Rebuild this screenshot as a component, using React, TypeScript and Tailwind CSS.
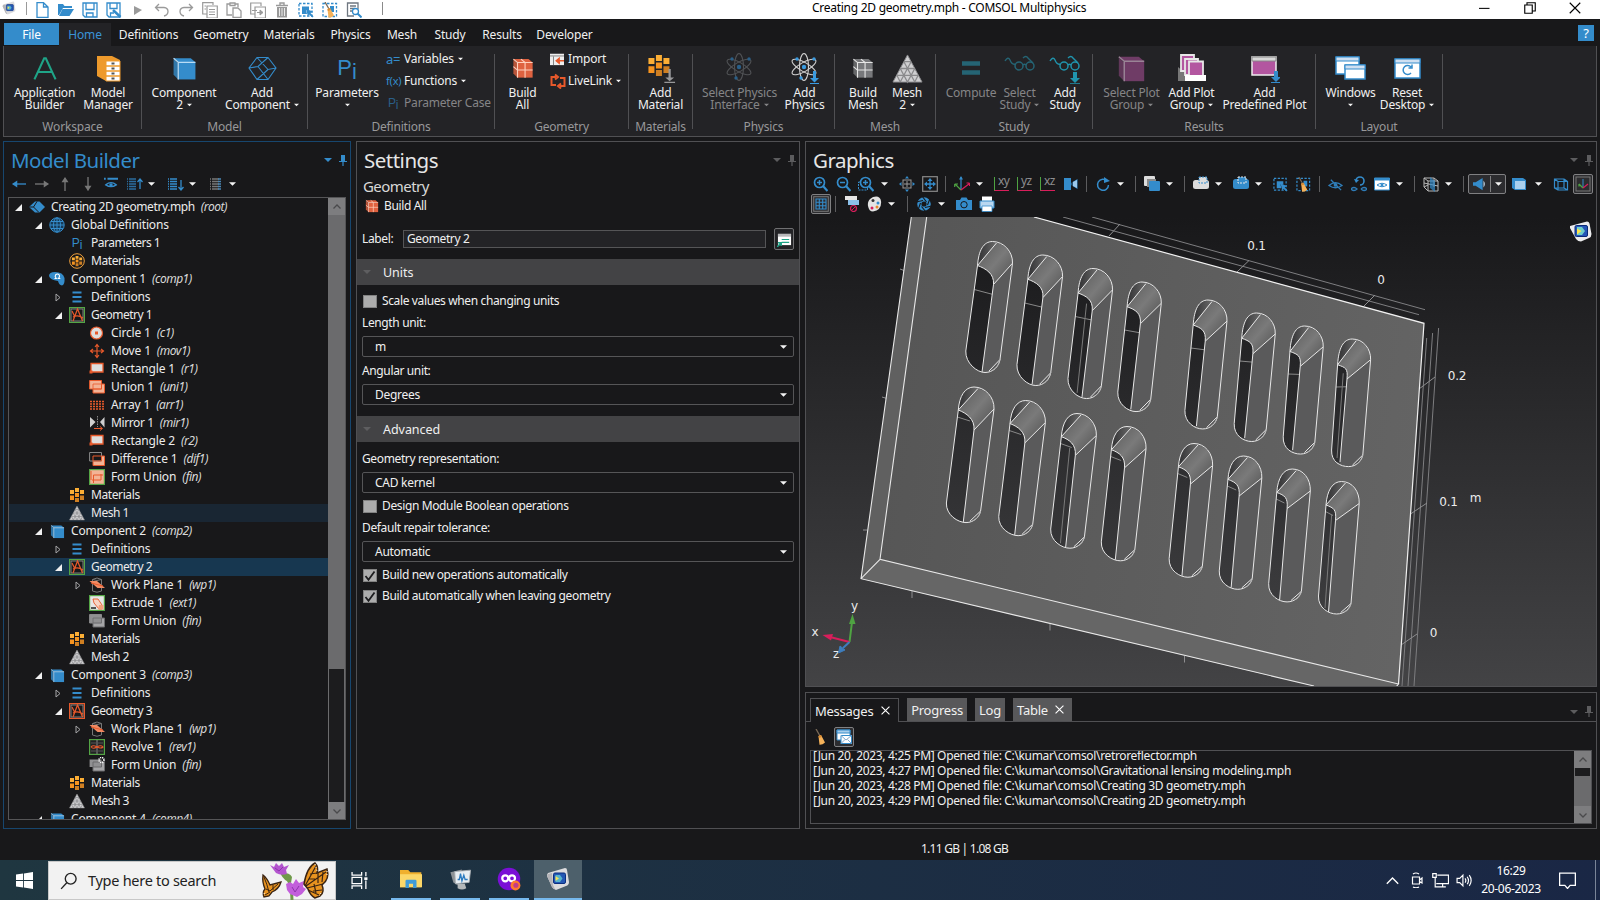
import React from "react";

type P = { children?: React.ReactNode; s?: number; w?: number; h?: number; vb?: string };
const B = "#348ccb";
const O = "#e8592b";
const W = "#f4f4f4";

const Svg = ({ children, s = 16, w, h, vb }: P) => (
  <svg width={w ?? s} height={h ?? s} viewBox={vb ?? "0 0 16 16"} fill="none" className="shrink-0 block">
    {children}
  </svg>
);

const Caret = ({ c = W, w = 7 }: { c?: string; w?: number }) => (
  <Svg w={w} h={4} vb="0 0 8 4">
    <path d="M0 0H8L4 4Z" fill={c} />
  </Svg>
);

const Cube = ({ s = 16, c = B, line = "#b9dcf5", grid = false }: { s?: number; c?: string; line?: string; grid?: boolean }) => (
  <Svg s={s}>
    <path d="M1 2L4 4.500V15L1 12Z" fill={c} opacity=".8" />
    <path d="M1 1.500H12L15 4H4Z" fill={c} />
    <path d="M4 4H15V15H4Z" fill={c} />
    <path d="M1 1.500L4 4V15M4 4H15" stroke={line} strokeWidth=".8" />
    {grid && <path d="M9.500 4V15M4 9.500H15M6.500 1.500L9.500 4M1 7L4 9.500" stroke={line} strokeWidth=".8" />}
  </Svg>
);

const Comsol = ({ s = 18 }: { s?: number }) => (
  <Svg s={s} vb="0 0 24 24">
    <path d="M2 6L19 1Q21 1 21 3L23 15Q23 18 20 19L10 23Q7 22 6 20L1 9Q1 7 2 6Z" fill="#dcdcde" />
    <path d="M2 7L6 6L7 18L9 22Q7 22 6 20L1 9Z" fill="#b4b4b8" />
    <rect x="7.500" y="6" width="12" height="10.500" rx="1.500" fill="#2458b4" stroke="#0b2f80" />
    <path d="M9.500 8H14L16.500 11.500L14 15H9.500Z" fill="#58b4cc" />
    <path d="M9.500 9L13 11.500L9.500 14Z" fill="#f5e35a" />
  </Svg>
);

const Broom = ({ s = 16, frame = true }: { s?: number; frame?: boolean }) => (
  <Svg s={s}>
    {frame && <rect x="1" y="1.500" width="13.500" height="13" stroke={B} strokeWidth="1.300" strokeDasharray="2.500 1.500" />}
    {frame && <path d="M8 4H12V10H8Z" fill={B} />}
    <path d="M3 0L7 7" stroke="#7a6a58" strokeWidth="1.300" />
    <path d="M5.500 7L8 6L12 13.500Q9.500 16 6.500 15.800Z" fill="#f5b25a" />
    <path d="M5.500 7L8 6L8.800 8L5.800 9Z" fill="#d98a30" />
  </Svg>
);

const SelectBox = ({ s = 16 }: { s?: number }) => (
  <Svg s={s}>
    <rect x="1" y="1.500" width="13" height="12.500" stroke={B} strokeWidth="1.300" strokeDasharray="2.500 1.500" />
    <path d="M4 4.500H11V8L8 8L9 12H4Z" fill={B} />
    <path d="M8 7L15 9.500L12.500 11L15.500 14.500L14.500 15.500L11 12.500L10 14.500Z" fill={B} />
  </Svg>
);

const Atom = ({ dim = false }: { dim?: boolean }) => {
  const c = dim ? "#505255" : "#d0d0d0";
  const b = dim ? "#2a5f88" : "#3a9be0";
  return (
    <Svg s={32} vb="0 0 32 32">
      <ellipse cx="15" cy="15" rx="4.500" ry="13.500" stroke={c} strokeWidth="1.100" />
      <ellipse cx="15" cy="15" rx="4.500" ry="13.500" stroke={c} strokeWidth="1.100" transform="rotate(60 15 15)" />
      <ellipse cx="15" cy="15" rx="4.500" ry="13.500" stroke={c} strokeWidth="1.100" transform="rotate(-60 15 15)" />
      <circle cx="15" cy="15" r="2.200" fill={b} />
      <circle cx="8" cy="7" r="1.700" fill={b} />
      <circle cx="25" cy="7" r="1.700" fill={b} />
      <circle cx="12" cy="26" r="1.700" fill={b} />
      {!dim && <path d="M24 19H27V26H30L25.500 30.500L21 26H24ZM21 31H30V32H21Z" fill={b} />}
    </Svg>
  );
};

const MeshTri = ({ s = 16 }: { s?: number }) => (
  <Svg s={s} vb="0 0 32 32">
    <path d="M16 2L31 30H1Z" fill="#cfcfd1" />
    <path d="M12.300 9H19.700M8.500 16H23.500M5 23H27M8.500 16L16 30L23.500 16M12.300 9L23.500 30M19.700 9L8.500 30M5 23L8.500 30M27 23L23.500 30" stroke="#8a8a8c" strokeWidth="1.300" />
    <path d="M16 2L31 30H1Z" stroke="#8a8a8c" />
  </Svg>
);

const Glasses = ({ c, add = false }: { c: string; add?: boolean }) => (
  <Svg s={32} vb="0 0 32 32">
    <circle cx="15" cy="14" r="4" stroke={c} strokeWidth="1.500" />
    <circle cx="26" cy="14" r="4" stroke={c} strokeWidth="1.500" />
    <path d="M19 13Q20.500 11.500 22 13M1 9Q4 4 6 8Q8 13 11 12M19 6Q22 3 24 6L29 11" stroke={c} strokeWidth="1.400" />
    {add && <path d="M24 20H28V26H31L26 31L21 26H24ZM21 31.200H31V32H21Z" fill={c} />}
  </Svg>
);

const Materials = ({ s = 16, circle = false, add = false }: { s?: number; circle?: boolean; add?: boolean }) => (
  <Svg s={s} vb="0 0 16 16">
    {circle && <circle cx="8" cy="8" r="7.300" stroke="#f0a03c" strokeWidth="1" />}
    <g transform={circle ? "translate(2.200 2.200) scale(.73)" : add ? "translate(.5 .3) scale(.8)" : ""}>
      <path d="M6 1H10V5H6ZM1 3H5V7H1ZM11 3H15V7H11Z" fill="#fcae35" />
      <path d="M1 8.500H5V13H1ZM6 6H10V10H6Z" fill="#f7941f" />
      <path d="M11 8.500H15V13H11ZM6 11H10V15H6Z" fill="#cf7f22" />
    </g>
    {add && <path d="M12 8.500H13.200V13H15L12.600 15L10.300 13H12ZM9.800 15.300H15.500V16H9.800Z" fill="#98989a" />}
  </Svg>
);

/* ---------- title bar ---------- */
const g2 = "#9a9a9a";
const quick: React.ReactNode[] = [
  <Svg key="n"><path d="M3 .7H9.500L14 5V15.300H3Z M9.500 .7V5H14" stroke={B} strokeWidth="1.300" /></Svg>,
  <Svg key="o"><path d="M0 2H5L6.500 4H14V6H5L1 13H0Z" fill={B} /><path d="M4.500 7H16L11.500 14H1Z" fill={B} /></Svg>,
  <Svg key="s"><path d="M1 1H15V15H3L1 13Z M4 1V7.500H12V1 M4.500 15V11H11V15" stroke={B} strokeWidth="1.300" /></Svg>,
  <Svg key="sa"><path d="M1 1H14V15H3L1 13Z M4 1V6.500H11V1 M4.500 15V11H8" stroke={B} strokeWidth="1.300" /><path d="M7 8L14.500 15" stroke={B} strokeWidth="2.500" /></Svg>,
  <Svg key="p"><path d="M4 4L12 8L4 13Z" fill={g2} /></Svg>,
  <Svg key="u"><path d="M2 5.500H10Q14 6 14 9.500Q14 13 10 14 M5 2L1.500 5.500L5 9" stroke={g2} strokeWidth="1.300" /></Svg>,
  <Svg key="r"><path d="M14 5.500H6Q2 6 2 9.500Q2 13 6 14 M11 2L14.500 5.500L11 9" stroke={g2} strokeWidth="1.300" /></Svg>,
  <Svg key="c"><path d="M5 12H.7V.7H11V3M5 4H15.300V16H5ZM7 7.500H13M7 10H13M7 12.500H13M2.500 4H4M2.500 7H4" stroke={g2} strokeWidth="1.200" /></Svg>,
  <Svg key="pa"><path d="M6 13H1V2H4M9 2H12V5M4 3.500V1H9V3.500ZM7 6H12L15 9V15.500H7Z" stroke={g2} strokeWidth="1.300" /></Svg>,
  <Svg key="d"><path d="M5 12H.7V1H11V4M5 5H15.500V16H5Z" stroke={g2} strokeWidth="1.200" /><path d="M2 8.500H7" stroke={g2} /><path d="M7 10.500H11M10 8L13 10.500L10 13Z" stroke={g2} fill={g2} /></Svg>,
  <Svg key="t"><path d="M2 3.500H14M6 3V1H10V3" stroke={g2} strokeWidth="1.400" /><path d="M3 5H13V15.500H3Z" fill={g2} /><path d="M5.500 6V14M8 6V14M10.500 6V14" stroke="#fff" strokeWidth=".8" /></Svg>,
  <SelectBox key="sb" />,
  <Broom key="b" />,
  <Svg key="f"><path d="M8 14H1.500V1H12V7M4 4H10M4 6.500H9M4 9H7" stroke="#6f7780" strokeWidth="1.300" /><circle cx="9.500" cy="9.500" r="3" stroke={B} strokeWidth="1.300" fill="#fff" /><path d="M11.500 11.500L15.500 15.500" stroke={B} strokeWidth="2" /></Svg>,
];

const TitleBar = () => (
  <div className="h-[19px] bg-white flex items-center shrink-0 text-black">
    <div className="w-[18px] -mt-1 flex justify-center"><Comsol s={14} /></div>
    <div className="w-px h-[13px] -mt-[3px] bg-[#9a9a9a] ml-2 mr-[3px]" />
    {quick.map((q, i) => <div key={i} className="w-6 h-[19px] flex justify-center items-center">{q}</div>)}
    <div className="w-px h-[13px] -mt-[3px] bg-[#8a8a8a] ml-[16px]" />
    <div className="ml-[429px] w-[275px] whitespace-nowrap tracking-[-0.27px] -mt-[3px]">Creating 2D geometry.mph - COMSOL Multiphysics</div>
    <div className="flex-1" />
    <div className="flex items-center gap-[33px] pr-[19px] -mt-[3px]">
      <Svg s={12}><path d="M0 8.500H14" stroke="#000" strokeWidth="1.400" /></Svg>
      <Svg s={12}><path d="M1 4H11V15H1ZM4 4V1H15V12H11" stroke="#000" strokeWidth="1.500" /></Svg>
      <Svg s={12}><path d="M1 1L15 15M15 1L1 15" stroke="#000" strokeWidth="1.500" /></Svg>
    </div>
  </div>
);

/* ---------- menu tabs ---------- */
const tabs: [string, string][] = [
  ["File", "w-[55px] bg-[#348ccb] text-white"],
  ["Home", "w-[52px] bg-[#232326] text-[#3a93d6]"],
  ["Definitions", "w-[75px]"],
  ["Geometry", "w-[70px]"],
  ["Materials", "w-[66px]"],
  ["Physics", "w-[57px]"],
  ["Mesh", "w-[46px]"],
  ["Study", "w-[50px]"],
  ["Results", "w-[54px]"],
  ["Developer", "w-[71px]"],
];
const MenuTabs = () => (
  <div className="h-[27px] pt-1 pl-1 pr-[6px] flex shrink-0 items-start">
    {tabs.map(([t, c]) => (
      <div key={t} className={`${t === "Home" ? "h-[23px]" : "h-[22px]"} pt-[4px] text-center whitespace-nowrap ${c}`}>{t}</div>
    ))}
    <div className="flex-1" />
    <div className="w-4 h-4 mt-[2px] bg-[#348ccb] text-white text-[13px] leading-4 text-center">?</div>
  </div>
);

/* ---------- ribbon ---------- */
type BtnP = { w: string; icon: React.ReactNode; a: string; b?: string; caret?: boolean; dim?: boolean };
const Btn = ({ w, icon, a, b, caret, dim }: BtnP) => (
  <div className={`${w} shrink-0 flex flex-col items-center whitespace-nowrap ${dim ? "text-[#858587]" : ""}`}>
    <div className="h-8 flex items-center justify-center mb-[2px]">{icon}</div>
    <div className="leading-[13px] h-[13px]">{a}</div>
    <div className="leading-[13px] h-[13px] flex items-center gap-1 -mt-px">
      {b}
      {caret && <Caret w={5} c={dim ? "#858587" : W} />}
    </div>
  </div>
);
const Group = ({ w, label, children }: { w: string; label: string; children: React.ReactNode }) => (
  <div className={`${w} shrink-0 h-[75px] mt-2 border-r border-[#505053]`}>
    <div className="flex -mt-[2px] h-[68px]">{children}</div>
    <div className="text-center text-[#98989a] leading-[14px]">{label}</div>
  </div>
);
const Small = ({ icon, t, caret, dim }: { icon: React.ReactNode; t: string; caret?: boolean; dim?: boolean }) => (
  <div className={`h-[22px] flex items-center whitespace-nowrap ${dim ? "text-[#858587]" : ""}`}>
    <div className="w-[18px]">{icon}</div>
    <span>{t}</span>
    {caret && <span className="ml-1"><Caret w={5} /></span>}
  </div>
);

const Ribbon = () => (
  <div className="h-[91px] ml-[3px] mr-[3px] bg-[#232326] border-l border-r border-b border-[#505053] flex shrink-0 tracking-[-0.18px]">
    <Group w="w-[138px]" label="Workspace">
      <Btn w="w-[81px]" a="Application" b="Builder" icon={<Svg s={26}><path d="M1.500 15L7.500 2H8.500L14.500 15M4 10.500H12" stroke="#1fa487" strokeWidth="1.300" /></Svg>} />
      <Btn w="w-[46px]" a="Model" b="Manager" icon={
        <Svg s={27} vb="0 0 27 27">
          <path d="M2 1H17L25 5V26L11 26L2 21Z" fill="#ee9a2c" />
          <path d="M11 6H25V26H11Z" fill="#fff" stroke="#ee9a2c" />
          <path d="M11 11H25M11 16H25M11 21H25" stroke="#ee9a2c" strokeWidth="1.500" />
          <path d="M16.500 8.500H19.500M16.500 13.500H19.500M16.500 18.500H19.500M16.500 23.500H19.500" stroke="#555" strokeWidth="2" />
        </Svg>} />
    </Group>
    <Group w="w-[166px]" label="Model">
      <Btn w="w-[84px]" a="Component" b="2" caret icon={<Cube s={25} />} />
      <Btn w="w-[72px]" a="Add" b="Component" caret icon={
        <Svg s={29} vb="0 0 29 26"><path d="M9 2L20 2L28 12.500L20 24L9 24L1 12.500ZM9 2L20 14L28 12.500M20 14L9 24M20 2L10 11L1 12.500M10 11L20 24" stroke={B} strokeWidth="1.100" /></Svg>} />
    </Group>
    <Group w="w-[187px]" label="Definitions">
      <Btn w="w-[78px]" a="Parameters" caret icon={<span className="font-['Liberation_Sans'] text-[22px] text-[#348ccb] tracking-normal">P<span className="relative top-1">i</span></span>} />
      <div className="flex flex-col -mt-1">
        <Small t="Variables" caret icon={<span className="text-[#348ccb] text-[13px]">a=</span>} />
        <Small t="Functions" caret icon={<span className="text-[#348ccb] text-[11px]">f(x)</span>} />
        <Small t="Parameter Case" dim icon={<span className="text-[#2a5f88] font-['Liberation_Sans'] pl-0.5">P<span className="relative top-0.5">i</span></span>} />
      </div>
    </Group>
    <Group w="w-[134px]" label="Geometry">
      <Btn w="w-[55px]" a="Build" b="All" icon={<Cube s={22} c="#df6240" line="#ffd0bd" grid />} />
      <div className="flex flex-col -mt-1">
        <Small t="Import" icon={<Svg s={14}><path d="M0 2H16V15H0Z" fill="#eee" /><path d="M0 4.500H16M4 5V15" stroke="#777" /><path d="M16 10H8M10.500 7L7 10L10.500 13Z" stroke={O} fill={O} strokeWidth="1.500" /></Svg>} />
        <Small t="LiveLink" caret icon={<Svg s={16}><path d="M6 4H1.500V12H4M10 13H14.500V5H12M5 1.500L8 4L5 6.500M11 10.500L8 13L11 15.500M4 12H6M10 5H12" stroke={O} strokeWidth="2" /></Svg>} />
      </div>
    </Group>
    <Group w="w-[64px]" label="Materials">
      <Btn w="w-[63px]" a="Add" b="Material" icon={<Materials s={30} add />} />
    </Group>
    <Group w="w-[142px]" label="Physics">
      <Btn w="w-[93px]" a="Select Physics" b="Interface" caret dim icon={<Atom dim />} />
      <Btn w="w-[37px]" a="Add" b="Physics" icon={<Atom />} />
    </Group>
    <Group w="w-[101px]" label="Mesh">
      <Btn w="w-[56px]" a="Build" b="Mesh" icon={<Cube s={22} c="#77787b" line="#e6e6e6" grid />} />
      <Btn w="w-[32px]" a="Mesh" b="2" caret icon={<MeshTri s={31} />} />
    </Group>
    <Group w="w-[157px]" label="Study">
      <Btn w="w-[70px]" a="Compute" dim icon={<Svg s={18}><path d="M0 2H16V6H0ZM0 10H16V14H0Z" fill="#256474" /></Svg>} />
      <Btn w="w-[27px]" a="Select" b="Study" caret dim icon={<Glasses c="#256474" />} />
      <Btn w="w-[64px]" a="Add" b="Study" icon={<Glasses c="#2094ad" add />} />
    </Group>
    <Group w="w-[223px]" label="Results">
      <Btn w="w-[77px]" a="Select Plot" b="Group" caret dim icon={<Cube s={29} c="#6f3c66" line="#9a8496" />} />
      <Btn w="w-[43px]" a="Add Plot" b="Group" caret icon={
        <Svg s={30} vb="0 0 30 30">
          <path d="M1 14L8 20V28H1Z" fill="#777" />
          <path d="M4 2H17V18H4Z" fill="#b356a0" stroke="#e8e8e8" strokeWidth="1.800" />
          <path d="M8 6H21V22H8Z" fill="#b356a0" stroke="#e8e8e8" strokeWidth="1.800" />
          <path d="M12 8.500H26V23H12Z" fill="#b356a0" stroke="#e8e8e8" strokeWidth="1.800" />
          <path d="M8 22H29V28H8Z" fill="#fff" />
        </Svg>} />
      <Btn w="w-[103px]" a="Add" b="Predefined Plot" icon={
        <Svg s={30} vb="0 0 30 30"><path d="M2 4H26V22H2Z" fill="#b356a0" stroke="#eee" strokeWidth="1.500" /><path d="M2 4H26V8H2Z" fill="#d8d8d8" stroke="#888" /><path d="M24 18H28V24H31L26 29L21 24H24ZM21 29H30V30H21Z" fill={B} /></Svg>} />
    </Group>
    <Group w="w-[127px]" label="Layout">
      <Btn w="w-[69px]" a="Windows" caret icon={
        <Svg s={31} vb="0 0 31 31">
          <path d="M1 4H24V21H1Z" fill="#fff" stroke={B} strokeWidth="1.500" /><path d="M1 4H24V8H1Z" fill="#cfe0f2" stroke={B} />
          <path d="M10 12H30V26H10Z" fill="#fff" stroke={B} strokeWidth="1.500" /><path d="M10 12H30V16H10Z" fill="#cfe0f2" stroke={B} />
        </Svg>} />
      <Btn w="w-[44px]" a="Reset" b="Desktop" caret icon={
        <Svg s={27} vb="0 0 27 27"><path d="M1 4H26V23H1Z" fill="#fff" stroke={B} strokeWidth="1.500" /><path d="M1 4H26V8H1Z" fill="#cfe0f2" stroke={B} /><path d="M17 18A4.500 4.500 0 1 1 17 12M18 9.500V13H14.500" stroke={B} strokeWidth="1.500" /></Svg>} />
    </Group>
  </div>
);

/* ---------- panel header ---------- */
const Pin = ({ c }: { c: string }) => (
  <Svg w={8} h={11} vb="0 0 8 11"><path d="M2 0H6V6H8V7H4.600V11H3.400V7H0V6H2Z" fill={c} /></Svg>
);
const PanelHead = ({ t, active }: { t: string; active?: boolean }) => (
  <div className={`h-[32px] pt-[5px] shrink-0 flex justify-between pl-[7px] pr-[3px] text-[20.500px] leading-[26px] tracking-[-0.5px] ${active ? "text-[#348ccb]" : "text-[#e6e6e6]"}`}>
    <span>{t}</span>
    <span className="flex gap-[7px] mt-[8px]">
      <span className="mt-[3px]"><Caret w={8} c={active ? B : "#5c5c5e"} /></span>
      <Pin c={active ? B : "#5c5c5e"} />
    </span>
  </div>
);

/* ---------- tree icons ---------- */
const GeomIcon = ({ c }: { c: string }) => (
  <Svg><rect x=".6" y=".6" width="14.800" height="14.800" stroke={c} strokeWidth="1.200" fill="#18181a" /><rect x="2" y="2" width="12" height="12" stroke="#9a9a9a" strokeWidth=".8" /><path d="M3 4L6 10M4 14L8.500 2L13.500 14M4 10Q9 7.500 14 11" stroke={O} strokeWidth="1.200" /></Svg>
);
const Rects = ({ back = "#f3b396", front = "#f3b396", stroke = O, line = O }: { back?: string; front?: string; stroke?: string; line?: string }) => (
  <Svg><path d="M4 5H15.500V14H4Z" fill={front} stroke={line} /><path d="M.6 1.500H12.500V10H.6Z" fill={back} stroke={stroke} /><path d="M4 5H12.500V10H4Z" stroke={line} strokeWidth=".8" /></Svg>
);
const RectIcon = <Svg><path d="M2 2.500H14V11H2Z" fill="#dedede" stroke={O} strokeWidth="1.300" /><path d="M.5 9.500H3.500V12.500H.5Z" fill={O} /></Svg>;
const WpIcon = <Svg><path d="M3.500 2.500V14Q8 16.500 12.500 14V2.500M3.500 2.500Q8 -.5 12.500 2.500Q8 4.500 3.500 2.500" stroke="#777" /><path d="M.5 4H8L16 11H8.500Z" fill="#f18a62" /><path d="M2 6L14 9" stroke={O} /></Svg>;
const ic: Record<string, React.ReactNode> = {
  root: <Svg><path d="M6 2.500H10.500L16 8L10.500 13.500H6L0 8Z" fill={B} /><path d="M8 2.500L4.500 8L10 13.500M4.500 8H0" stroke="#18181a" strokeWidth="1" /></Svg>,
  globe: <Svg><circle cx="8" cy="8" r="7.200" stroke={B} fill="#173a57" /><ellipse cx="8" cy="8" rx="3.500" ry="7.200" stroke={B} /><path d="M1 8H15M2 4.500H14M2 11.500H14M8 1V15" stroke={B} /></Svg>,
  pi: <span className="text-[#348ccb] font-['Liberation_Sans'] text-[12px]">P<span className="relative top-[2px]">i</span></span>,
  matc: <Materials circle />,
  mat: <Materials />,
  comp2d: <Svg><path d="M0 5Q0 1 6 1Q14 1 15.500 7Q16 14 13 14.500Q10 14 9 10Q1 9 0 5Z" fill={B} /><path d="M5.500 7.500H7.300Q5.500 5.500 6.500 4Q8.500 2 10.300 4Q11 6 9.500 7.500H11.300" stroke="#fff" strokeWidth="1.100" /></Svg>,
  comp: <Cube s={15} />,
  def: <Svg><path d="M3.500 3.500H12.500M3.500 8H12.500M3.500 12.500H12.500" stroke={B} strokeWidth="2" /></Svg>,
  geom: <GeomIcon c="#54a545" />,
  geomr: <GeomIcon c={O} />,
  circle: <Svg><circle cx="7.500" cy="8" r="6" fill="#dedede" stroke={O} strokeWidth="1.200" /><path d="M6 6.500H9V9.500H6Z" fill={O} /></Svg>,
  move: <Svg><path d="M8 2V14M2 8H14M6 4L8 1.500L10 4M6 12L8 14.500L10 12M4 6L1.500 8L4 10M12 6L14.500 8L12 10" stroke={O} strokeWidth="1.200" /></Svg>,
  rect: RectIcon,
  union: <Rects />,
  array: <Svg><path d="M1 4.500H15M1 7H15M1 9.500H15M1 12H15" stroke={O} strokeWidth="1.300" strokeDasharray="2 1" /></Svg>,
  mirror: <Svg><path d="M1 2L6.500 7L1 12.500ZM15.500 2L11 7L15.500 12.500Z" fill="#cfcfcf" /><path d="M8.500 1V12" stroke="#888" strokeDasharray="1.500 1" /><path d="M5 13.500H13M11 11.500L13.500 13.500L11 15.500" stroke={O} /></Svg>,
  diff: <Svg><path d="M4 5H15.500V14.500H4Z" fill="#f3b396" stroke={O} /><path d="M.6 1.500H12.500V10H.6Z" fill="#18181a" stroke="#8a8a8a" /><path d="M4 5H12.500V10H4Z" stroke={O} /></Svg>,
  form: <Svg><rect x=".6" y=".6" width="14.800" height="14.800" fill="#f3b396" stroke="#54a545" strokeWidth="1.200" /><path d="M2 2V11M3 11H12V5M4.500 14V6H14" stroke={O} /></Svg>,
  formg: <Rects back="#909092" front="#a5a5a7" stroke="#8a8a8c" line="#6a6a6c" />,
  formgs: <Svg><path d="M4 5H15.500V14H4Z" fill="#a5a5a7" stroke="#6a6a6c" /><path d="M.6 2.500H12.500V10H.6Z" fill="#909092" /><path d="M4 5H12.500V10H4Z" stroke="#6a6a6c" /><circle cx="12.500" cy="3" r="2.500" stroke="#fff" strokeDasharray="1.200 .8" strokeWidth="1.500" /></Svg>,
  wp: WpIcon,
  ext: <Svg><rect x=".6" y=".6" width="14.800" height="14.800" fill="#e6e6e6" stroke="#54a545" strokeWidth="1.200" /><path d="M4 4H9L13 10V14H10L5 8Z" fill="#f7d4c4" stroke={O} strokeWidth=".9" /><path d="M10 10H14.500V14.500H9Z" fill="#f3a07c" /><path d="M2 13H7" stroke="#222" strokeWidth="1.500" /></Svg>,
  rev: <Svg><rect x=".6" y=".6" width="14.800" height="14.800" fill="#222224" stroke="#54a545" strokeWidth="1.200" /><path d="M8 1V15" stroke="#8a8a8a" /><path d="M2 8Q4 5.500 8 8Q12 5.500 14 8Q12 10 8 8Q4 10.500 2 8" stroke={O} strokeWidth="1.200" /><path d="M2 4H14M2 12H14" stroke="#555" /></Svg>,
  mesh: <MeshTri />,
};

type Row = [number, "o" | "c" | "", string, string, string?, string?];
const tree: Row[] = [
  [0, "o", "root", "Creating 2D geometry.mph", "(root)"],
  [1, "o", "globe", "Global Definitions"],
  [2, "", "pi", "Parameters 1"],
  [2, "", "matc", "Materials"],
  [1, "o", "comp2d", "Component 1", "(comp1)"],
  [2, "c", "def", "Definitions"],
  [2, "o", "geom", "Geometry 1"],
  [3, "", "circle", "Circle 1", "(c1)"],
  [3, "", "move", "Move 1", "(mov1)"],
  [3, "", "rect", "Rectangle 1", "(r1)"],
  [3, "", "union", "Union 1", "(uni1)"],
  [3, "", "array", "Array 1", "(arr1)"],
  [3, "", "mirror", "Mirror 1", "(mir1)"],
  [3, "", "rect", "Rectangle 2", "(r2)"],
  [3, "", "diff", "Difference 1", "(dif1)"],
  [3, "", "form", "Form Union", "(fin)"],
  [2, "", "mat", "Materials"],
  [2, "", "mesh", "Mesh 1", "", "bg-[#192633]"],
  [1, "o", "comp", "Component 2", "(comp2)"],
  [2, "c", "def", "Definitions"],
  [2, "o", "geom", "Geometry 2", "", "bg-[#173750]"],
  [3, "c", "wp", "Work Plane 1", "(wp1)"],
  [3, "", "ext", "Extrude 1", "(ext1)"],
  [3, "", "formg", "Form Union", "(fin)"],
  [2, "", "mat", "Materials"],
  [2, "", "mesh", "Mesh 2"],
  [1, "o", "comp", "Component 3", "(comp3)"],
  [2, "c", "def", "Definitions"],
  [2, "o", "geomr", "Geometry 3"],
  [3, "c", "wp", "Work Plane 1", "(wp1)"],
  [3, "", "rev", "Revolve 1", "(rev1)"],
  [3, "", "formgs", "Form Union", "(fin)"],
  [2, "", "mat", "Materials"],
  [2, "", "mesh", "Mesh 3"],
  [1, "o", "comp", "Component 4", "(comp4)"],
];
const indent = ["pl-0", "pl-5", "pl-10", "pl-[60px]"];
const tracking = (t: string) =>
  /^(Geometry|Parameters|Mesh)/.test(t) ? "tracking-[-0.5px]" : /^(Materials|Creating|Mirror)/.test(t) ? "tracking-[-0.4px]" : "tracking-[-0.15px]";

const ScrollBtn = ({ up }: { up?: boolean }) => (
  <div className="h-[17px] bg-[#7d7d7f] flex items-center justify-center shrink-0">
    <Svg s={8}><path d={up ? "M1 11L8 4L15 11" : "M1 5L8 12L15 5"} stroke="#4a4a4c" strokeWidth="2.500" /></Svg>
  </div>
);

const ListIcon = ({ c1, c2, dir }: { c1: string; c2: string; dir?: "up" | "down" }) => (
  <Svg w={17} h={13} vb="0 0 17 13">
    <path d="M1 1H10M1 3.500H10M1 6H10M1 8.500H10M1 11H10" stroke={c1} strokeWidth="1.300" strokeDasharray="1 1 8 0" />
    {dir === "up" && <path d="M14 11V2M11.500 4L14 1L16.500 4" stroke={c2} strokeWidth="1.300" />}
    {dir === "down" && <path d="M14 2V11M11.500 9L14 12L16.500 9" stroke={c2} strokeWidth="1.300" />}
    {!dir && <path d="M9 1H12M9 3.500H12M9 6H12M9 8.500H12M9 11H12" stroke={c2} strokeWidth="1.300" />}
  </Svg>
);

const ModelBuilder = () => (
  <div className="w-[348px] shrink-0 border border-[#17466e] flex flex-col">
    <PanelHead t="Model Builder" active />
    <div className="h-[23px] flex items-center pl-[8px] pb-[3px] shrink-0">
      <div className="w-[23px]"><Svg s={14}><path d="M1 8H16" stroke={B} strokeWidth="1.500" /><path d="M6 4L0 8L6 12Z" fill={B} /></Svg></div>
      <div className="w-[23px]"><Svg s={14}><path d="M0 8H15" stroke="#777" strokeWidth="1.500" /><path d="M10 4L16 8L10 12Z" fill="#777" /></Svg></div>
      <div className="w-[23px]"><Svg s={14}><path d="M8 1V16" stroke="#777" strokeWidth="1.500" /><path d="M4 6L8 0L12 6Z" fill="#777" /></Svg></div>
      <div className="w-[23px]"><Svg s={14}><path d="M8 0V15" stroke="#777" strokeWidth="1.500" /><path d="M4 10L8 16L12 10Z" fill="#777" /></Svg></div>
      <div className="w-[22px]"><Svg s={14}><path d="M0 2H2M4 2H16" stroke={B} strokeWidth="2.500" /><path d="M2 9Q8 4 14 9Q8 13 2 9Z" stroke={B} strokeWidth="1.500" /><circle cx="8" cy="9" r="2" fill={B} /></Svg></div>
      <div className="w-[22px]"><ListIcon c1="#2b6c9e" c2={B} dir="up" /></div>
      <div className="w-[19px]"><Caret /></div>
      <div className="w-[22px]"><ListIcon c1={B} c2={B} dir="down" /></div>
      <div className="w-[20px]"><Caret /></div>
      <div className="w-[20px]"><ListIcon c1="#777" c2="#4a86b5" /></div>
      <Caret />
    </div>
    <div className="ml-1 mr-1 mt-0 border border-[#555557] h-[623px] flex overflow-hidden">
      <div className="flex-1 h-[621px] overflow-hidden">
        {tree.map(([lv, st, icon, t, it, bg], i) => (
          <div key={i} className={`h-[18px] flex items-center whitespace-nowrap ${indent[lv]} ${bg ?? ""}`}>
            <div className="w-[20px] pl-[6px] shrink-0">
              {st === "o" && <Svg w={7} h={7} vb="0 0 7 7"><path d="M7 0V7H0Z" fill="#f0f0f0" /></Svg>}
              {st === "c" && <Svg w={6} h={9} vb="0 0 6 9"><path d="M1 1L5 4.500L1 8Z" stroke="#a5a5a7" /></Svg>}
            </div>
            <div className="w-4 flex justify-center shrink-0">{ic[icon]}</div>
            <span className={`ml-[6px] text-[#ececec] ${tracking(t)}`}>{t}</span>
            {it && <span className="ml-[6px] italic text-[#d8d8d8] tracking-[-0.5px]">{it}</span>}
          </div>
        ))}
      </div>
      <div className="w-[17px] flex flex-col bg-[#1c1c1e] border-[#6d6d6f]">
        <ScrollBtn up />
        <div className="h-[454px] bg-[#6b6b6d]" />
        <div className="h-[133px] border-x border-[#6b6b6d]" />
        <ScrollBtn />
      </div>
    </div>
  </div>
);

/* ---------- settings ---------- */
const Combo = ({ t }: { t: string }) => (
  <div className="h-[21px] mx-[5px] border border-[#555557] rounded-[2px] flex items-center justify-between pl-3 pr-[6px] tracking-[-0.28px]">
    <span>{t}</span><Caret />
  </div>
);
const Section = ({ t }: { t: string }) => (
  <div className="h-[26px] bg-[#434345] flex items-center pl-[6px] text-[12.500px] tracking-[-0.05px]">
    <Caret w={8} c="#5e5e60" /><span className="ml-[12px] mt-px text-[#f0f0f0]">{t}</span>
  </div>
);
const Check = ({ t, on }: { t: string; on?: boolean }) => (
  <div className="h-[14px] flex items-center pl-[6px]">
    <div className="w-[14px] h-[13px] bg-[#acacac] border border-[#828282] mr-[5px]">
      {on && <Svg s={12}><path d="M2 8L6 13L14 2" stroke="#1c1c1e" strokeWidth="2.400" /></Svg>}
    </div>
    <span>{t}</span>
  </div>
);
const Lbl = ({ t }: { t: string }) => <div className="h-4 leading-4 pl-[5px]">{t}</div>;

const Settings = () => (
  <div className="w-[444px] ml-[5px] shrink-0 border border-[#505053] flex flex-col tracking-[-0.37px]">
    <PanelHead t="Settings" />
    <div className="h-[23px] leading-[24px] pl-[6px] text-[15px] tracking-[-0.55px] text-[#d8d8d8]">Geometry</div>
    <div className="h-[18px] flex items-center pl-2 mb-[14px]"><Cube s={14} c="#df6240" line="#ffd0bd" grid /><span className="ml-[5px]">Build All</span></div>
    <div className="h-[20px] flex items-center pl-[5px] pr-[5px] mb-[10px]">
      <span className="w-[41px]">Label:</span>
      <div className="flex-1 h-[18px] border border-[#555557] bg-[#232326] leading-4 pl-[3px] mr-[8px]">Geometry 2</div>
      <div className="w-[20px] h-[22px] border border-[#707072] rounded-[2px] bg-[#232326] flex items-center justify-center">
        <Svg s={15}><path d="M1 2H15V14H1Z" fill="#fff" /><path d="M1 2H15V5H1Z" fill="#b9b9bb" /><path d="M5 8H13M5 11H13" stroke="#1fa487" strokeWidth="1.300" /><path d="M0 16L4 12M1 11.500H4.500V15" stroke="#1fa487" strokeWidth="1.600" /></Svg>
      </div>
    </div>
    <Section t="Units" />
    <div className="h-[9px]" />
    <Check t="Scale values when changing units" />
    <div className="h-[7px]" />
    <Lbl t="Length unit:" />
    <div className="h-[5px]" />
    <Combo t="m" />
    <div className="h-[6px]" />
    <Lbl t="Angular unit:" />
    <div className="h-[5px]" />
    <Combo t="Degrees" />
    <div className="h-[11px]" />
    <Section t="Advanced" />
    <div className="h-[9px]" />
    <Lbl t="Geometry representation:" />
    <div className="h-[5px]" />
    <Combo t="CAD kernel" />
    <div className="h-[6px]" />
    <Check t="Design Module Boolean operations" />
    <div className="h-[7px]" />
    <Lbl t="Default repair tolerance:" />
    <div className="h-[5px]" />
    <Combo t="Automatic" />
    <div className="h-[6px]" />
    <Check on t="Build new operations automatically" />
    <div className="h-[7px]" />
    <Check on t="Build automatically when leaving geometry" />
  </div>
);

/* ---------- graphics ---------- */
const Ic = ({ children, w = "w-[23px]" }: { children: React.ReactNode; w?: string }) => (
  <div className={`${w} shrink-0 flex justify-center items-center`}>{children}</div>
);
const Ar = () => <div className="w-[17px] pr-[5px] shrink-0 flex justify-center"><Caret /></div>;
const Sep = () => <div className="w-[9px] shrink-0 flex justify-center"><div className="w-px h-4 bg-[#5c5c5e]" /></div>;
const Zoom = ({ k, box }: { k: string; box?: boolean }) => (
  <Svg>{box && <rect x=".5" y="6" width="9" height="8" stroke={B} strokeDasharray="2 1" />}
    <circle cx="7.500" cy="6.500" r="5" stroke={B} strokeWidth="1.700" fill="#18181a" /><path d="M11 10L15.500 15" stroke={B} strokeWidth="2.200" /><path d={k} stroke={B} strokeWidth="1.500" /></Svg>
);
const Plane = ({ t }: { t: string }) => (
  <div className="w-[15px] h-[14px] border-l border-b border-l-[#4fa342] border-b-[#d81e5b] text-[12px] leading-[8px] text-[#8e8e90] pl-[3px] tracking-[-0.5px]">{t}</div>
);

const GfxBars = () => (
  <>
    <div className="h-5 flex items-center pl-[2px] shrink-0">
      <Ic><Zoom k="M5 6.500H10M7.500 4V9" /></Ic>
      <Ic><Zoom k="M5 6.500H10" /></Ic>
      <Ic w="w-6"><Zoom k="M5 6.500H10M7.500 4V9" box /></Ic><Ar />
      <Ic><Svg><rect x="4" y="4" width="8" height="8" stroke="#9a9a9a" /><path d="M8 5V11M5 8H11" stroke="#9a9a9a" /><path d="M8 0L10 2.500H6ZM8 16L10 13.500H6ZM0 8L2.500 6V10ZM16 8L13.500 6V10Z" fill={B} /></Svg></Ic>
      <Ic><Svg><rect x=".7" y=".7" width="14.600" height="14.600" stroke="#8a8a8a" strokeWidth="1.200" /><path d="M8 5V11M5 8H11" stroke={B} strokeWidth="1.300" /><path d="M8 2L10.500 5H5.500ZM8 14L10.500 11H5.500ZM2 8L5 5.500V10.500ZM14 8L11 5.500V10.500Z" fill={B} /></Svg></Ic>
      <Sep />
      <Ic><Svg><path d="M7 1V13" stroke={B} strokeWidth="1.200" /><path d="M7 0L9 3.500H5Z" fill={B} /><path d="M7 14L1 8M.7 8V11M.7 8H4" stroke="#4fa342" strokeWidth="1.200" /><path d="M7 14L15.500 7.500M15.500 7H12.500M15.500 7V10" stroke="#d81e5b" strokeWidth="1.200" /></Svg></Ic><Ar />
      <Ic><Plane t="xy" /></Ic><Ic><Plane t="yz" /></Ic><Ic><Plane t="xz" /></Ic>
      <Ic><Svg><path d="M1 2H8V7L14.500 3V13L8 9V14H1Z" fill={B} /><path d="M9 4V12" stroke="#18181a" /><path d="M10 6L14 4V12L10 10Z" fill="#9cc9ec" /></Svg></Ic>
      <Sep />
      <Ic><Svg><path d="M12 5A5.500 5.500 0 1 0 13.500 9" stroke={B} strokeWidth="1.500" /><path d="M9 1L15 5L9 7Z" fill={B} /></Svg></Ic><Ar />
      <Sep />
      <Ic><Svg><rect x="0" y="0" width="11" height="10" rx="1" fill="#dcdcdc" /><rect x="3" y="3" width="9" height="8" fill="#8a8a8a" /><rect x="5" y="5" width="11" height="10" rx="1" fill={B} /></Svg></Ic><Ar />
      <Sep />
      <Ic><Svg><rect x="0" y="4" width="16" height="9" rx="2.500" fill="#dcdcdc" /><rect x="6" y="1" width="8" height="6" fill="#dcdcdc" stroke={B} strokeDasharray="2 1" /></Svg></Ic><Ar />
      <Ic><Svg><rect x="0" y="3" width="16" height="10" rx="2.500" fill={B} /><rect x="5" y="1" width="8" height="6" fill={B} stroke="#e8e8e8" strokeDasharray="2 1" /></Svg></Ic><Ar />
      <Ic><SelectBox s={15} /></Ic><Ic><Broom s={15} /></Ic>
      <Sep />
      <Ic><Svg s={15}><path d="M1 9Q8 3 15 9Q8 14 1 9Z M3 3L14 14" stroke="#2f7db8" strokeWidth="1.400" /><circle cx="8" cy="8.500" r="2" fill="#2f7db8" /></Svg></Ic>
      <Ic><Svg><path d="M5 5A4 4 0 1 1 9 9" stroke={B} strokeWidth="1.600" /><path d="M3 3L5 7L8 4Z" fill={B} /><path d="M0 13Q3 10 6 13Q3 16 0 13M10 13Q13 10 16 13Q13 16 10 13" stroke="#2f7db8" strokeWidth="1.300" /></Svg></Ic>
      <Ic><Svg><path d="M.5 2H15.500V14H.5Z" fill="#fff" stroke={B} /><path d="M.5 2H15.500V4.500H.5Z" fill={B} /><path d="M3 9Q8 5.500 13 9Q8 12.500 3 9Z" stroke={B} /><circle cx="8" cy="9" r="1.500" fill={B} /></Svg></Ic><Ar />
      <Sep />
      <Ic><Svg><path d="M1 2H11L15 5V15H5L1 11ZM1 2L5 5H15M5 5V15M1 11L5 9M11 2V11M1 7L15 10" stroke="#b8b8b8" /><path d="M7 1L12 5V16L7 12Z" fill={B} opacity=".7" /></Svg></Ic><Ar />
      <Sep />
      <div className="w-[38px] h-5 shrink-0 border border-[#808082] rounded-[2px] bg-[#2c2c2f] flex items-center justify-evenly">
        <Svg s={14}><path d="M0 6H3L11 1V15L3 10H0Z" fill={B} /><path d="M12 4Q15 8 12 12Z" fill="#cde4f6" /></Svg>
        <div className="w-px h-4 bg-[#808082]" /><Caret />
      </div>
      <Ic w="w-[26px]"><Svg><path d="M1 2H12L15 4V14H4L1 12Z" fill={B} /><path d="M4 5H14V13H4Z" fill="#a9d0ee" /></Svg></Ic><Ar />
      <Ic><Svg><path d="M1.500 3H11V12H1.500ZM5 5.500H14.500V14H5ZM1.500 3L5 5.500M11 3L14.500 5.500M11 12L14.500 14M1.500 12L5 14" stroke={B} strokeWidth="1.200" /></Svg></Ic>
      <div className="ml-px w-5 h-5 shrink-0 border border-[#808082] rounded-[2px] bg-[#2c2c2f] flex items-center justify-center">
        <Svg><rect x="1" y="1" width="14" height="14" stroke="#777" /><path d="M8 3V11" stroke={B} /><path d="M8 12L4 8M4 8V10.500" stroke="#4fa342" strokeWidth="1.300" /><path d="M8 12L13 8" stroke="#d81e5b" strokeWidth="1.300" /></Svg>
      </div>
    </div>
    <div className="h-5 flex items-center pl-[5px] shrink-0">
      <div className="w-5 h-5 shrink-0 border border-[#808082] rounded-[2px] bg-[#2c2c2f] flex items-center justify-center">
        <Svg><rect x=".7" y=".7" width="14.600" height="14.600" stroke="#777" /><path d="M3 3H13V13H3ZM6.300 3V13M9.700 3V13M3 6.300H13M3 9.700H13" stroke={B} strokeWidth="1.100" /></Svg>
      </div>
      <Sep />
      <Ic><Svg><path d="M1 0H13V4H1Z" fill="#e6e6e6" /><path d="M4 4H15V9H4Z" fill="#8cc1ea" /><circle cx="9.500" cy="12.500" r="3" stroke="#d81e5b" strokeWidth="1.200" /><path d="M7.500 14.500L11.500 10.500" stroke="#d81e5b" /></Svg></Ic>
      <Ic w="w-6"><Svg><path d="M1 10Q0 4 6 1Q13 -1 14 5Q15 14 6 15.500Q2 15.500 1 10Z" fill="#e4e4e4" /><circle cx="6" cy="4.500" r="1.500" fill="#333" /><circle cx="11" cy="7" r="1.500" fill={B} /><circle cx="10" cy="11" r="1.500" fill="#e8892b" /><circle cx="5" cy="12" r="1.500" fill="#d81e5b" /></Svg></Ic>
      <div className="w-4 pl-px pr-[6px]"><Caret /></div><Sep />
      <Ic><Svg><circle cx="8" cy="8" r="4.700" stroke={B} strokeWidth="4.200" /><path d="M6 0L10.500 6M14 2.500L11.500 9M16 10L9 11.500M10 16L5.500 10.500M2 14L4.500 7M0 6L7 4.500" stroke="#18181a" strokeWidth="1.100" /></Svg></Ic><Ar />
      <Ic><Svg><path d="M0 4H4L5.500 1.500H10.500L12 4H16V14H0Z" fill={B} /><circle cx="8" cy="8.700" r="3.200" stroke="#18181a" /></Svg></Ic>
      <Ic><Svg><path d="M3 .5H13V5H3Z" fill="#fff" /><path d="M1 5H15V12H1Z" fill="#b9d7f0" stroke={B} /><path d="M3 10H13V15.500H3Z" fill="#fff" stroke={B} strokeWidth=".8" /></Svg></Ic>
    </div>
  </>
);

/* Slot outline keypoints relative to the top of the arc, at the first and last column of each row. */
type Pt = [number, number];
type Shape = { l: Pt; r: Pt; e: Pt; lb: Pt; b: Pt; rb: Pt; h: Pt };
const rows: { tops: Pt[]; a: Shape; z: Shape; tick: number }[] = [
  {
    tops: [[992.5, 241.5], [1042.8, 255], [1093, 268.5], [1142, 282], [1208, 300], [1256.5, 313], [1304.7, 326], [1352.3, 339]],
    a: { l: [-15, 24], r: [20, 21.7], e: [1, 43], lb: [-26.7, 109.5], b: [-7.5, 131], rb: [7.5, 118], h: [-10.5, 130.5] },
    z: { l: [-14.7, 25.7], r: [18.3, 20.7], e: [-5.3, 40], lb: [-20.7, 111], b: [-3.8, 127.6], rb: [10.5, 116], h: [-12.3, 123] },
    tick: 48,
  },
  {
    tops: [[974, 387], [1025.7, 400.5], [1077, 413.5], [1127, 426.5], [1194, 443.5], [1243.5, 456], [1292.3, 469], [1341.5, 481.5]],
    a: { l: [-15.7, 23], r: [20, 22], e: [0, 43], lb: [-27.6, 116], b: [-8, 135.6], rb: [6.6, 124], h: [-10.7, 135] },
    z: { l: [-15.5, 23.5], r: [17.7, 22], e: [-6, 39], lb: [-23, 114.5], b: [-4.8, 132.5], rb: [9.5, 122], h: [-13, 130.5] },
    tick: 30,
  },
];
const mix = (p: Pt, q: Pt, u: number): Pt => [p[0] + (q[0] - p[0]) * u, p[1] + (q[1] - p[1]) * u];

const Slot = ({ t, a, z, u, tick, extra }: { t: Pt; a: Shape; z: Shape; u: number; tick: number; extra: boolean }) => {
  const k = (n: keyof Shape): Pt => { const m = mix(a[n], z[n], u); return [t[0] + m[0], t[1] + m[1]]; };
  const l = k("l"), r = k("r"), e = k("e"), lb = k("lb"), b = k("b"), rb = k("rb"), h = k("h");
  const [tx, ty] = t;
  const q: Pt = [tx + 4, ty + 1.5];
  const topArc = `C${l[0] + 1} ${ty + 9} ${tx - 9} ${ty} ${tx} ${ty}C${tx + 11} ${ty} ${r[0] + 0.5} ${ty + 10} ${r[0]} ${r[1]}`;
  const lowRight = `L${rb[0]} ${rb[1]}C${rb[0] - 1} ${b[1] - 6} ${b[0] + 8} ${b[1]} ${b[0]} ${b[1]}`;
  const outline = `M${l[0]} ${l[1]}${topArc}${lowRight}C${b[0] - 8} ${b[1]} ${lb[0] - 0.5} ${lb[1] + 12} ${lb[0]} ${lb[1]}Z`;
  const inner = `C${l[0] + 8} ${l[1] + 3} ${e[0] + 1} ${e[1] - 11} ${e[0]} ${e[1]}`;
  const hole = `M${l[0]} ${l[1]}${inner}L${h[0]} ${h[1]}C${b[0] - 11} ${b[1] - 2} ${lb[0] - 0.5} ${lb[1] + 10} ${lb[0]} ${lb[1]}Z`;
  const cyl = `M${l[0]} ${l[1]}L${q[0]} ${q[1]}C${tx + 12} ${ty + 3} ${r[0] + 0.5} ${ty + 12} ${r[0]} ${r[1]}L${e[0]} ${e[1]}C${e[0] + 1} ${e[1] - 11} ${l[0] + 8} ${l[1] + 3} ${l[0]} ${l[1]}Z`;
  const kx = (tick - (l[1] - ty)) / (lb[1] - l[1]);
  const tl = mix(l, lb, kx);
  const te: Pt = tick > 40 ? mix(e, h, Math.max(0, kx - 0.18)) : [tl[0] + (e[0] - l[0]) * 0.8, tl[1] + 3];
  const x1 = mix(l, e, 0.6), x2 = mix(lb, h, 0.65);
  return (
    <g>
      <path d={outline} fill="#5a5a5b" />
      <path d={`M${l[0]} ${l[1]}C${l[0] + 1} ${ty + 9} ${tx - 9} ${ty} ${tx} ${ty}L${q[0]} ${q[1]}Z`} fill="url(#dk)" />
      <path d={cyl} fill="url(#cyl)" />
      <path d={hole} fill="url(#bg)" />
      <path d={`M${tl[0]} ${tl[1]}L${te[0]} ${te[1] + 1}`} stroke="#888" />
      {extra && <path d={`M${x1[0]} ${x1[1]}L${x2[0]} ${h[1] - 4}`} stroke="#7a7a7a" />}
      <path d={outline} stroke="#e8e8e8" />
      <path d={`M${l[0]} ${l[1]}${inner}L${h[0]} ${h[1]}`} stroke="#e8e8e8" />
      <path d={`M${l[0]} ${l[1]}L${q[0]} ${q[1]}M${e[0]} ${e[1]}L${r[0]} ${r[1]}M${b[0] + 4} ${b[1] - 1.5}L${rb[0]} ${rb[1]}`} stroke="#e8e8e8" />
      <path d={`M${rb[0]} ${rb[1]}Q${rb[0] - 2} ${rb[1] + 8} ${b[0] + 7} ${b[1] - 2}`} stroke="#aaa" strokeWidth=".8" />
    </g>
  );
};

const Scene = () => (
  <svg width="790" height="469" viewBox="806 217 790 469" fill="none" className="block">
    <defs>
      <linearGradient id="bg" gradientUnits="userSpaceOnUse" x1="0" y1="217" x2="0" y2="686"><stop offset="0" stopColor="#18181a" /><stop offset="1" stopColor="#434345" /></linearGradient>
      <linearGradient id="face" gradientUnits="userSpaceOnUse" x1="880" y1="400" x2="1424" y2="480"><stop offset="0" stopColor="#565656" /><stop offset="1" stopColor="#646464" /></linearGradient>
      <linearGradient id="cyl" x1="0" y1="0" x2="1" y2="1"><stop offset="0" stopColor="#5a5a5a" /><stop offset=".5" stopColor="#7a7a7a" /><stop offset="1" stopColor="#4e4e4e" /></linearGradient>
      <linearGradient id="dk" x1="0" y1="0" x2="1" y2="0"><stop offset="0" stopColor="#303032" /><stop offset="1" stopColor="#6a6a6a" /></linearGradient>
    </defs>
    <rect x="806" y="217" width="790" height="469" fill="url(#bg)" />
    <path d="M1092 217L1425 309.700M1063 217L1419 314.700" stroke="#7e7e80" />
    <path d="M1109 236L1120 224M1237 272L1249 260.500M1363.500 306.500L1375 295" stroke="#8e8e90" />
    <path d="M1426.700 338L1402 686M1432.600 333L1408 686M1438.600 328L1414 686" stroke="#7e7e80" />
    <path d="M1419 389L1435 377M1410.500 514L1427 503M1401 645L1417 634" stroke="#8e8e90" />
    <path d="M900 269L904 270.500M882 397L887 398.500M863 530H867M912 591V598M1050 624V630.500M1184.500 656V662.500" stroke="#8e8e90" />
    <path d="M911.300 217H1034L1424 323.300L1398.500 684L1396 690L1330 690L861 578.700Z" fill="#606060" />
    <path d="M926.700 217H1034L1424 323.300L1398.500 684L880 559.300Z" fill="url(#face)" />
    <path d="M861 578.700L880 559.300L1398.500 684L1396 690H1330Z" fill="#666" />
    <path d="M911.300 217L861 578.700L1314 686M926.700 217L880 559.300L1398.500 684L1396 687M861 578.700L880 559.300" stroke="#e8e8e8" strokeWidth="1.100" />
    <path d="M1034 217L1424 323.300L1398.500 684" stroke="#f0f0f0" strokeWidth="1.200" />
    {rows.map((row, ri) =>
      row.tops.map((t, i) => (
        <Slot key={`${ri}-${i}`} t={t} a={row.a} z={row.z} tick={row.tick} extra={i === 2 || i === 7} u={(t[0] - row.tops[0][0]) / (row.tops[7][0] - row.tops[0][0])} />
      ))
    )}
    <g fill="#ececec" fontFamily="DejaVu Sans, sans-serif" fontSize="12" textAnchor="middle">
      <text x="1256.500" y="250">0.1</text>
      <text x="1381" y="284">0</text>
      <text x="1457" y="380">0.2</text>
      <text x="1448.500" y="506">0.1</text>
      <text x="1475.500" y="502">m</text>
      <text x="1433.500" y="637">0</text>
      <text x="854.500" y="610">y</text>
      <text x="815" y="636">x</text>
      <text x="836" y="658">z</text>
    </g>
    <path d="M849.500 642L852 622" stroke="#4fa342" strokeWidth="2" /><path d="M852.500 614L855.500 624H849Z" fill="#4fa342" />
    <path d="M849.500 642L830 637" stroke="#d81e5b" strokeWidth="2" /><path d="M822.500 635L833 634L831 640.500Z" fill="#d81e5b" />
    <path d="M849.500 642L843 648" stroke="#3d7dbd" strokeWidth="2" /><path d="M838.500 653L840 646L845 650Z" fill="#3d7dbd" stroke="#3d7dbd" />
    <g transform="translate(1569 221)">
      <path d="M1 5L18 .5Q20 .5 20.500 2.500L22.500 13Q22.500 16 20 17L12 20.500Q9 20.500 7 18L1 7Z" fill="#ececee" />
      <rect x="6" y="4.500" width="12.500" height="11" rx="1.500" fill="#2556b8" stroke="#0a2a75" />
      <path d="M8 6H13L16 10L13 14H8Z" fill="#6fcfc9" /><path d="M8 7.500L12.500 10L8 13.500Z" fill="#ffe54a" />
    </g>
  </svg>
);

/* ---------- messages ---------- */
const msgs = [
  "[Jun 20, 2023, 4:25 PM] Opened file: C:\\kumar\\comsol\\retroreflector.mph",
  "[Jun 20, 2023, 4:27 PM] Opened file: C:\\kumar\\comsol\\Gravitational lensing modeling.mph",
  "[Jun 20, 2023, 4:28 PM] Opened file: C:\\kumar\\comsol\\Creating 3D geometry.mph",
  "[Jun 20, 2023, 4:29 PM] Opened file: C:\\kumar\\comsol\\Creating 2D geometry.mph",
];
const X = () => <Svg s={9}><path d="M1 1L15 15M15 1L1 15" stroke="#fff" strokeWidth="2" /></Svg>;

const Messages = () => (
  <div className="h-[137px] mt-[5px] border border-[#505053] flex flex-col shrink-0">
    <div className="h-[29px] pt-[5px] pl-1 pr-[3px] flex border-b border-[#505053] text-[13px] tracking-[-0.25px]">
      <div className="w-[89px] h-[24px] border border-b-0 border-[#505053] bg-[#18181a] flex items-center pl-1 gap-[8px]"><span className="mt-px">Messages</span><X /></div>
      <div className="w-[60px] ml-2 bg-[#58585a] flex items-center justify-center">Progress</div>
      <div className="w-[30px] ml-2 bg-[#58585a] flex items-center justify-center">Log</div>
      <div className="w-[59px] ml-2 bg-[#58585a] flex items-center pl-1 gap-[7px]">Table <X /></div>
      <div className="flex-1" />
      <div className="flex gap-[7px] pt-[8px]"><span className="mt-[4px]"><Caret w={8} c="#5c5c5e" /></span><Pin c="#5c5c5e" /></div>
    </div>
    <div className="h-[28px] flex items-center pl-[7px] pt-[2px]">
      <Broom frame={false} />
      <div className="ml-[5px] w-5 h-5 border border-[#808082] rounded-[2px] bg-[#2c2c2f] flex items-center justify-center">
        <Svg><path d="M1 1H14V11H1Z" fill="#fff" stroke={B} /><path d="M1 1H14V4H1Z" fill="#a9cdea" stroke={B} /><path d="M5 6.500H15.500V14.500H5Z" fill="#fff" stroke={B} /><path d="M5 6.500L10 11L15.500 6.500M5 14.500L9 10.500M15.500 14.500L11.500 10.500" stroke="#88aacc" /></Svg>
      </div>
    </div>
    <div className="mx-1 h-[74px] border border-[#505053] flex overflow-hidden">
      <div className="flex-1 pl-[2px] -mt-[3px] tracking-[-0.34px]">
        {msgs.map((m) => <div key={m} className="h-[15px] leading-[15px] whitespace-nowrap">{m}</div>)}
      </div>
      <div className="w-[17px] flex flex-col bg-[#6b6b6d]">
        <ScrollBtn up /><div className="h-2 bg-[#1c1c1e] mx-px" /><div className="h-[30px]" /><ScrollBtn />
      </div>
    </div>
  </div>
);

/* ---------- taskbar ---------- */
const Butterfly = () => (
  <Svg w={70} h={38} vb="0 0 70 38">
    <path d="M31 38Q31 26 26 14" stroke="#6f9a4a" strokeWidth="3" />
    <path d="M19 11Q28 10 31 15L30 21Q23 19 19 11Z" fill="#6f9a4a" />
    <path d="M9 3L13 5L15 1L18 4L21 1L23 5L28 3L25 8L26 12Q20 14 15 11L12 7Z" fill="#b455cf" />
    <path d="M25 22L29 20L32 22L35 17L38 21L43 19L42 25L45 27L41 32L36 35L29 32L26 28Z" fill="#c25edb" />
    <path d="M31 25L34 30L38 24M14 6L18 9L22 5" stroke="#8e35ad" />
    <path d="M2 13Q6 16 9 23L20 20Q18 27 11 30L8 34L3 35Q1 30 4 27Q1 20 2 13Z" fill="#e8931f" stroke="#3a2413" strokeWidth="1.300" />
    <path d="M8 30Q6 22 3 15M9 29L17 22M9 30L4 33M5 27L9 29M12 23L12 28" stroke="#3a2413" />
    <path d="M43 22Q46 5 54 1Q58 5 56 11L66 7Q69 17 61 23Q64 30 59 34L54 36Q49 33 47 27Z" fill="#e8931f" stroke="#3a2413" strokeWidth="1.500" />
    <path d="M44 24L55 4M45 24L65 10M46 26L62 22M47 28L58 33M49 12L56 11M52 29L61 28M57 11L57 21M48 17L54 17M53 22L55 31M62 10L61 20" stroke="#3a2413" strokeWidth="1.200" />
    <path d="M54 2L56 9M66 9L66 15M60 31L58 34M3 31L4 34" stroke="#fff" strokeWidth="1" strokeDasharray="1 2" />
  </Svg>
);
const TaskApp = ({ children, last }: { children: React.ReactNode; last?: boolean }) => (
  <div className={`h-10 flex flex-col items-center ${last ? "w-[48px] bg-[#4d606b] ml-[5px]" : "w-[40px] ml-[9px]"}`}>
    <div className="flex-1 flex items-center">{children}</div>
    <div className="h-[2px] w-full bg-[#76b9ed]" />
  </div>
);

const Taskbar = () => (
  <div className="h-10 shrink-0 bg-linear-to-r from-[#1f3640] to-[#1a2745] flex items-center text-white">
    <div className="w-12 flex justify-center"><Svg s={17}><path d="M0 2.300L6.700 1.400V7.600H0ZM7.500 1.300L16 0V7.600H7.500ZM0 8.400H6.700V14.600L0 13.700ZM7.500 8.400H16V16L7.500 14.700Z" fill="#fff" /></Svg></div>
    <div className="w-[288px] h-[39px] mt-px bg-[#f2f2f2] border border-[#c8c8c8] flex items-center text-[#222] pl-[11px]">
      <Svg s={18}><circle cx="9.500" cy="6" r="4.800" stroke="#222" strokeWidth="1.200" /><path d="M6 9.500L1 15" stroke="#222" strokeWidth="1.200" /></Svg>
      <span className="ml-[10px] -mt-0.5 text-[14.500px] tracking-[-0.28px] w-[173px]">Type here to search</span>
      <Butterfly />
    </div>
    <div className="w-[46px] flex justify-center"><Svg s={17}><path d="M1 0V3H10V0M1 16V13H10V16M1 5H10V11H1ZM14 0V4M14 8V16" stroke="#fff" strokeWidth="1.200" /><path d="M12.500 5H15.500V7.500H12.500Z" fill="#fff" /></Svg></div>
    <TaskApp><Svg s={22}><path d="M0 1.500H6L7.500 3H15.500V14H0Z" fill="#f0b02e" /><path d="M0 4.500H16V14H0Z" fill="#fcd768" /><path d="M4 14.500V9.500Q4 8.500 5 8.500H11Q12 8.500 12 9.500V14.500H9.500V11.500H6.500V14.500Z" fill="#3f9bd8" /></Svg></TaskApp>
    <TaskApp><Svg s={23}><path d="M1 3L9 1L6 12L3 10Z" fill="#8d9296" /><path d="M4 2.500L15 1.500L14 10L4.500 11Z" fill="#e8eef2" stroke="#a9afb3" strokeWidth=".6" /><path d="M6 8H7.200L8 4L9 9L10.300 5L11.200 8H13" stroke="#2c7bbf" strokeWidth=".9" /><path d="M6 11H11L12 14Q9 16 6 14Z" fill="#b4b8ba" /></Svg></TaskApp>
    <TaskApp><Svg s={24}><circle cx="8" cy="8" r="7.500" fill="#7a0fd6" /><circle cx="5.500" cy="7.500" r="2" stroke="#fff" strokeWidth="1.500" /><circle cx="10" cy="7.500" r="2" stroke="#fff" strokeWidth="1.500" /><circle cx="12.300" cy="12.300" r="3.300" fill="#ff7a2e" /><circle cx="12.600" cy="12.200" r="1.700" fill="#c33b8a" /></Svg></TaskApp>
    <TaskApp last><Comsol s={24} /></TaskApp>
    <div className="flex-1" />
    <div className="flex items-center gap-[7px]">
      <div className="w-[17px] flex justify-center"><Svg s={13}><path d="M1 12L8 5L15 12" stroke="#fff" strokeWidth="1.700" /></Svg></div>
      <div className="w-[17px] flex justify-center"><Svg><path d="M3.500 5H10.500V12H3.500ZM10.500 8L13 6V11L10.500 9.500M4 2Q7 0 10 2M4 15Q7 16.500 10 15" stroke="#fff" strokeWidth="1.200" /></Svg></div>
      <div className="w-[17px] flex justify-center"><Svg s={17}><path d="M5 3H15.500V11H4M3 5V14H10M8 14H13M10 11V14M.7 1.500H4V5H.7Z" stroke="#fff" strokeWidth="1.100" /></Svg></div>
      <div className="w-[17px] flex justify-center"><Svg s={17}><path d="M1 6H3.500L6.500 3V13L3.500 10H1ZM8.500 6Q10 8 8.500 10M10.500 4.500Q13 8 10.500 11.500M12.500 3Q16 8 12.500 13" stroke="#fff" strokeWidth="1.100" /></Svg></div>
    </div>
    <div className="w-[76px] text-center leading-[18px] pb-px tracking-[-0.3px]">16:29<br />20-06-2023</div>
    <div className="w-[36px] flex justify-center"><Svg s={17}><path d="M.6 1H15.400V12.500H10.500L8 15.500L5.500 12.500H.6Z" stroke="#fff" strokeWidth="1.200" /></Svg></div>
    <div className="ml-[10px] mr-1 w-px h-10 bg-[#7a8598]" />
  </div>
);

export default function App() {
  return (
    <div className="w-[1600px] h-[900px] overflow-hidden bg-[#18181a] flex flex-col text-[12px] leading-4 tracking-[-0.15px] text-[#f0f0f0] font-['Noto_Sans','Open_Sans',sans-serif]">
      <TitleBar />
      <MenuTabs />
      <Ribbon />
      <div className="flex h-[688px] mt-1 pl-[3px] shrink-0">
        <ModelBuilder />
        <Settings />
        <div className="w-[792px] ml-[5px] flex flex-col">
          <div className="h-[546px] shrink-0 border border-[#505053] flex flex-col">
            <PanelHead t="Graphics" />
            <GfxBars />
            <div className="h-[3px] shrink-0" />
            <Scene />
          </div>
          <Messages />
        </div>
      </div>
      <div className="flex-1 flex items-center pl-[921px] pt-[9px] tracking-[-0.75px]">1.11 GB | 1.08 GB</div>
      <Taskbar />
    </div>
  );
}
